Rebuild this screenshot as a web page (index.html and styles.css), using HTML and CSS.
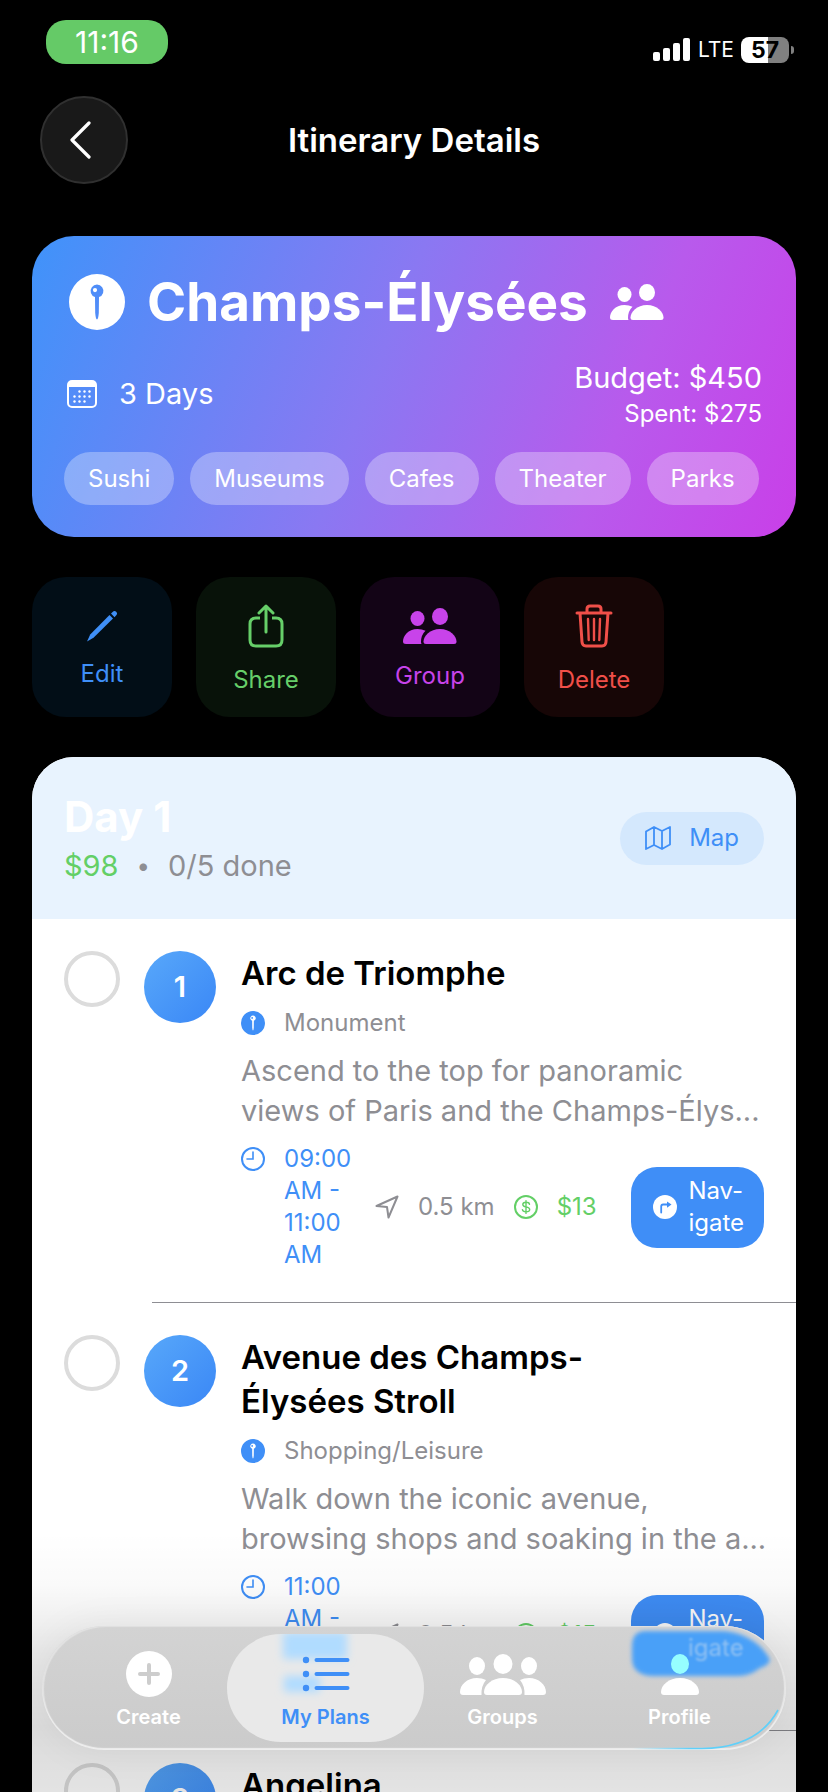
FILE: index.html
```html
<!DOCTYPE html>
<html lang="en">
<head>
	<meta charset="UTF-8">
	<meta name="viewport" content="width=device-width, initial-scale=1">
	<title>Itinerary Details</title>
	<link rel="stylesheet" href="styles.css">
</head>
<body>
	<svg class="sprite" aria-hidden="true">
		<symbol id="pin" viewBox="0 0 56 56">
			<path fill-rule="evenodd" d="M28 0A28 28 0 1 1 28 56A28 28 0 1 1 28 0ZM26 23L26.200 39Q26.800 45.500 28 45.500Q29.200 45.500 29.800 39L30 23A6.400 6.400 0 1 0 26 23ZM26 14A2.100 2.100 0 1 1 26 18.200A2.100 2.100 0 1 1 26 14Z"/>
		</symbol>
		<symbol id="people" viewBox="0 0 54 36">
			<ellipse cx="14.500" cy="10.500" rx="7" ry="7.500"/>
			<ellipse cx="37" cy="8.500" rx="8" ry="8.500"/>
			<path d="M3 36Q0 36 0 33.500C0 28 5 21 14.500 21Q19 21 22.500 22.800Q18 27 18 34Q18 35 18.500 36Z"/>
			<path d="M23 36Q20.500 36 20.500 33.500C20.500 28 27 21 37 21S53.500 28 53.500 33.500Q53.500 36 51 36Z"/>
		</symbol>
		<symbol id="clock" viewBox="0 0 24 24">
			<circle cx="12" cy="12" r="11" fill="none" stroke="currentColor" stroke-width="2"/>
			<path d="M12 5V12H6" fill="none" stroke="currentColor" stroke-width="1.600" stroke-linecap="round"/>
		</symbol>
		<symbol id="arrow" viewBox="0 0 24 24">
			<path d="M1.500 11L22.500 1.500L13.500 22.500L12 12Z" fill="none" stroke="currentColor" stroke-width="2" stroke-linejoin="round"/>
		</symbol>
		<symbol id="coin" viewBox="0 0 24 24">
			<circle cx="12" cy="12" r="11" fill="none" stroke="currentColor" stroke-width="2"/>
			<path d="M15.500 9.200Q15 7.300 12 7.300Q8.800 7.300 8.800 9.500Q8.800 11.300 12 11.900Q15.700 12.600 15.700 14.500Q15.700 16.800 12 16.800Q8.800 16.800 8.400 14.700M12 5.600V18.400" fill="none" stroke="currentColor" stroke-width="1.400" stroke-linecap="round"/>
		</symbol>
		<symbol id="turn" viewBox="0 0 24 24">
			<circle cx="12" cy="12" r="12" fill="#fff"/>
			<path d="M8.200 17.500V11.500Q8.200 9.500 10.200 9.500H14.500" fill="none" stroke="#3f8ef7" stroke-width="1.800" stroke-linecap="round"/>
			<path d="M14 6.500L18.500 9.600L14 12.700Z" fill="#3f8ef7"/>
		</symbol>
	</svg>

	<div class="app">
		<div class="status">
			<span class="clock">11:16</span>
			<div class="signal">
				<svg width="38" height="24" viewBox="0 0 38 24" fill="#fff" aria-hidden="true">
					<rect x="0" y="14" width="7" height="9" rx="2"/>
					<rect x="10" y="10" width="7" height="13" rx="2"/>
					<rect x="20" y="5" width="7" height="18" rx="2"/>
					<rect x="30" y="0" width="7" height="23" rx="2"/>
				</svg>
				<span class="network">LTE</span>
				<span class="battery">57</span>
			</div>
		</div>

		<header class="topbar">
			<button type="button" class="back" aria-label="Back">
				<svg width="24" height="38" viewBox="0 0 24 38" aria-hidden="true">
					<path d="M20 2L3 19L20 36" fill="none" stroke="#fff" stroke-width="3.200" stroke-linecap="round" stroke-linejoin="round"/>
				</svg>
			</button>
			<h1 class="topbar-title">Itinerary Details</h1>
		</header>

		<main class="content">
			<section class="trip">
				<div class="trip-head">
					<svg class="trip-pin" aria-hidden="true"><use href="#pin"/></svg>
					<h2 class="trip-name">Champs-Élysées</h2>
					<svg class="people" aria-hidden="true"><use href="#people"/></svg>
				</div>
				<div class="trip-info">
					<svg width="30" height="28" viewBox="0 0 30 28" aria-hidden="true">
						<rect x="1" y="1" width="28" height="26" rx="4" fill="none" stroke="#fff" stroke-width="2"/>
						<path d="M1 7V4Q1 1 4 1H26Q29 1 29 4V7Z" fill="#fff"/>
						<g fill="#fff">
							<circle cx="12.500" cy="11.500" r="1.200"/><circle cx="17.500" cy="11.500" r="1.200"/><circle cx="22.500" cy="11.500" r="1.200"/>
							<circle cx="7.500" cy="16.500" r="1.200"/><circle cx="12.500" cy="16.500" r="1.200"/><circle cx="17.500" cy="16.500" r="1.200"/><circle cx="22.500" cy="16.500" r="1.200"/>
							<circle cx="7.500" cy="21.500" r="1.200"/><circle cx="12.500" cy="21.500" r="1.200"/><circle cx="17.500" cy="21.500" r="1.200"/>
						</g>
					</svg>
					<span class="days">3 Days</span>
					<div class="money">
						<div class="budget">Budget: $450</div>
						<div class="spent">Spent: $275</div>
					</div>
				</div>
				<ul class="tags">
					<li class="tag">Sushi</li>
					<li class="tag">Museums</li>
					<li class="tag">Cafes</li>
					<li class="tag">Theater</li>
					<li class="tag">Parks</li>
				</ul>
			</section>

			<div class="actions">
				<button type="button" class="action edit">
					<svg width="32" height="32" viewBox="0 0 32 32" fill="currentColor" aria-hidden="true">
						<path d="M23.500 5L27 8.500L7.500 27.800L1 31.500L4.200 24.500Z"/>
						<path d="M25 3.500L27.500 1.300Q28.800 0.300 30.200 1.800Q31.800 3.400 30.700 4.700L28.500 7.200Z"/>
					</svg>
					Edit
				</button>
				<button type="button" class="action share">
					<svg width="36" height="44" viewBox="0 0 36 44" fill="none" stroke="currentColor" stroke-width="3" stroke-linecap="round" stroke-linejoin="round" aria-hidden="true">
						<path d="M12 14H8Q2 14 2 20V36Q2 42 8 42H28Q34 42 34 36V20Q34 14 28 14H24" stroke-linecap="butt"/>
						<path d="M18 28V2M11 9L18 2L25 9"/>
					</svg>
					Share
				</button>
				<button type="button" class="action group">
					<svg class="people" aria-hidden="true"><use href="#people"/></svg>
					Group
				</button>
				<button type="button" class="action delete">
					<svg width="38" height="44" viewBox="0 0 38 44" fill="none" stroke="currentColor" stroke-width="3" stroke-linecap="round" stroke-linejoin="round" aria-hidden="true">
						<path d="M2 9H36M12 9V5Q12 2 15 2H23Q26 2 26 5V9M5 9L7 38Q7.300 42 11 42H27Q30.700 42 31 38L33 9"/>
						<path d="M13 15L13.700 36M19 15V36M25 15L24.300 36" stroke-width="2.400"/>
					</svg>
					Delete
				</button>
			</div>

			<section class="day">
				<div class="day-head">
					<div>
						<h2 class="day-title">Day 1</h2>
						<div class="day-info">
							<span class="cost">$98</span>
							<span class="dot">•</span>
							<span>0/5 done</span>
						</div>
					</div>
					<button type="button" class="map">
						<svg width="26" height="24" viewBox="0 0 26 24" fill="none" stroke="currentColor" stroke-width="1.800" stroke-linejoin="round" aria-hidden="true">
							<path d="M1 5.500L9 1V19L1 23ZM9 1L17 5V23L9 19M17 5L25 1V18.500L17 23"/>
						</svg>
						Map
					</button>
				</div>

				<article class="stop">
					<input type="checkbox" class="check" aria-label="Arc de Triomphe done">
					<span class="number">1</span>
					<div class="stop-body">
						<h3 class="stop-title">Arc de Triomphe</h3>
						<div class="category">
							<svg class="icon" aria-hidden="true"><use href="#pin"/></svg>
							<span>Monument</span>
						</div>
						<p class="desc">Ascend to the top for panoramic<br>views of Paris and the Champs-Élys...</p>
						<div class="meta">
							<div class="time">
								<svg class="icon" aria-hidden="true"><use href="#clock"/></svg>
								<span class="hours">09:00 AM - 11:00 AM</span>
							</div>
							<div class="fact">
								<svg class="icon" aria-hidden="true"><use href="#arrow"/></svg>
								<span>0.5 km</span>
							</div>
							<div class="fact price">
								<svg class="icon" aria-hidden="true"><use href="#coin"/></svg>
								<span>$13</span>
							</div>
							<button type="button" class="navigate">
								<svg class="icon" aria-hidden="true"><use href="#turn"/></svg>
								<span>Nav-<br>igate</span>
							</button>
						</div>
					</div>
				</article>
				<hr class="line">

				<article class="stop">
					<input type="checkbox" class="check" aria-label="Avenue des Champs-Élysées Stroll done">
					<span class="number">2</span>
					<div class="stop-body">
						<h3 class="stop-title">Avenue des Champs-<br>Élysées Stroll</h3>
						<div class="category">
							<svg class="icon" aria-hidden="true"><use href="#pin"/></svg>
							<span>Shopping/Leisure</span>
						</div>
						<p class="desc">Walk down the iconic avenue,<br>browsing shops and soaking in the a...</p>
						<div class="meta">
							<div class="time">
								<svg class="icon" aria-hidden="true"><use href="#clock"/></svg>
								<span class="hours">11:00 AM - 01:00 PM</span>
							</div>
							<div class="fact">
								<svg class="icon" aria-hidden="true"><use href="#arrow"/></svg>
								<span>0.5 km</span>
							</div>
							<div class="fact price">
								<svg class="icon" aria-hidden="true"><use href="#coin"/></svg>
								<span>$15</span>
							</div>
							<button type="button" class="navigate">
								<svg class="icon" aria-hidden="true"><use href="#turn"/></svg>
								<span>Nav-<br>igate</span>
							</button>
						</div>
					</div>
				</article>
				<hr class="line">

				<article class="stop">
					<input type="checkbox" class="check" aria-label="Angelina done">
					<span class="number">3</span>
					<div class="stop-body">
						<h3 class="stop-title">Angelina</h3>
					</div>
				</article>
			</section>
		</main>

		<div class="shade"></div>

		<nav class="tabs">
			<!-- colour that bleeds through the glass from the list below -->
			<svg class="glow" viewBox="0 0 744 124" preserveAspectRatio="none" aria-hidden="true">
				<defs>
					<filter id="soft" x="-20%" y="-40%" width="140%" height="180%"><feGaussianBlur stdDeviation="2"/></filter>
					<filter id="faint" x="-20%" y="-40%" width="140%" height="180%"><feGaussianBlur stdDeviation="0.800"/></filter>
					<linearGradient id="cyan"><stop offset="0" stop-color="#5fd0fa" stop-opacity="0"/><stop offset=".4" stop-color="#5fd0fa"/><stop offset="1" stop-color="#5fd0fa"/></linearGradient>
				</defs>
				<path d="M590 20Q590 5 604 5H680C704 6 722 20 728 34Q727 39 718 42Q708 50 696 50H610Q590 49 590 32Z" fill="#48a0f8" filter="url(#soft)"/>
				<text x="646" y="30" class="ghost" filter="url(#faint)">igate</text>
				<path d="M590 122.500H660C700 122 723 108 736 84" fill="none" stroke="url(#cyan)" stroke-width="1.600"/>
			</svg>
			<a href="#create" class="tab">
				<svg width="46" height="46" viewBox="0 0 46 46" aria-hidden="true">
					<circle cx="23" cy="23" r="23" fill="#fff"/>
					<path d="M23 14V32M14 23H32" stroke="#cdcdcd" stroke-width="4" stroke-linecap="round"/>
				</svg>
				<span>Create</span>
			</a>
			<a href="#plans" class="tab active">
				<svg class="bleed" width="196" height="108" viewBox="0 0 196 108" aria-hidden="true">
					<defs><filter id="wide" x="-30%" y="-60%" width="160%" height="220%"><feGaussianBlur stdDeviation="4"/></filter></defs>
					<rect x="56" y="-2" width="64" height="27" fill="#b0dcff" filter="url(#wide)"/>
					<rect x="57" y="42" width="36" height="16" fill="#b0dcff" filter="url(#wide)"/>
				</svg>
				<svg width="48" height="46" viewBox="0 0 48 46" fill="currentColor" aria-hidden="true">
					<circle cx="4" cy="9" r="3.200"/><circle cx="4" cy="23" r="3.200"/><circle cx="4" cy="37" r="3.200"/>
					<path d="M14.500 9H45.500M14.500 23H45.500M14.500 37H45.500" stroke="currentColor" stroke-width="4" stroke-linecap="round"/>
				</svg>
				<span>My Plans</span>
			</a>
			<a href="#groups" class="tab">
				<svg width="86" height="46" viewBox="0 0 86 46" fill="currentColor" aria-hidden="true">
					<ellipse cx="17" cy="15" rx="8" ry="9"/>
					<ellipse cx="69" cy="15" rx="8" ry="9"/>
					<ellipse cx="43" cy="13" rx="9.500" ry="10"/>
					<path d="M3 44Q0 44 0 41C0 34 7 27 17 27Q22 27 26 29Q21 35 21.500 44Z"/>
					<path d="M83 44Q86 44 86 41C86 34 79 27 69 27Q64 27 60 29Q65 35 64.500 44Z"/>
					<path d="M27 44Q24 44 24 41C24 34 32 27 43 27S62 34 62 41Q62 44 59 44Z"/>
				</svg>
				<span>Groups</span>
			</a>
			<a href="#profile" class="tab">
				<svg width="38" height="46" viewBox="0 0 38 46" aria-hidden="true">
					<ellipse cx="19" cy="13" rx="9" ry="10" fill="#96feff"/>
					<path d="M3 44Q0 44 0 41C0 34 8 27 19 27S38 34 38 41Q38 44 35 44Z" fill="#fff"/>
				</svg>
				<span>Profile</span>
			</a>
		</nav>
	</div>
</body>
</html>
```
FILE: styles.css
```css
*{
	box-sizing: border-box;
}
body{
	margin: 0;
	background-color: #000;
	font-family: Inter, "Liberation Sans", sans-serif;
	font-size: 24px;
	line-height: 32px;
}
h1, h2, h3, p, ul{
	margin: 0;
	padding: 0;
}
button{
	font: inherit;
	border: none;
	padding: 0;
	cursor: pointer;
}
svg{
	flex: none;
}
.sprite{
	position: absolute;
	width: 0;
	height: 0;
}
.app{
	height: 100vh;
	position: relative;
	overflow: hidden;
	display: flex;
	flex-direction: column;
}

/* status bar */
.status{
	flex: none;
	display: flex;
	justify-content: space-between;
	align-items: flex-start;
	padding: 20px 34px 0 46px;
	color: #fff;
}
.clock{
	width: 122px;
	line-height: 44px;
	text-align: center;
	font-size: 30px;
	border-radius: 20px;
	background-color: #65ca67;
}
.signal{
	display: flex;
	align-items: center;
	gap: 7px;
	height: 60px;
}
.network{
	font-size: 21px;
}
.battery{
	position: relative;
	width: 48px;
	margin-right: 5px;
	line-height: 26px;
	text-align: center;
	font-size: 23px;
	font-weight: 700;
	color: #000;
	border-radius: 8px;
	background: linear-gradient(90deg, #fff 56%, #808080 56%);
}
.battery::after{
	content: "";
	position: absolute;
	right: -5px;
	top: 9px;
	width: 3px;
	height: 8px;
	border-radius: 0 4px 4px 0;
	background-color: #808080;
}

/* top bar */
.topbar{
	flex: none;
	display: grid;
	grid-template-columns: 88px 1fr 88px;
	align-items: center;
	padding: 16px 40px 52px;
}
.back{
	display: flex;
	align-items: center;
	justify-content: center;
	height: 88px;
	padding-right: 6px;
	border-radius: 50%;
	border: 2px solid #303030;
	background-color: #191919;
}
.topbar-title{
	text-align: center;
	color: #fff;
	font-size: 33px;
	font-weight: 600;
}

.content{
	flex: 1;
	min-height: 0;
	overflow: hidden;
	padding: 0 32px;
}

/* trip card */
.trip{
	padding: 32px;
	color: #fff;
	border-radius: 42px;
	background: linear-gradient(111deg, #3f93fa, #8a78f2 45%, #b85aec 75%, #c93fe8);
}
.trip-head{
	display: flex;
	align-items: center;
	gap: 22px;
	padding-left: 5px;
	height: 68px;
}
.trip-pin{
	width: 56px;
	height: 56px;
	fill: #fff;
}
.trip-name{
	font-size: 53px;
	line-height: 68px;
	font-weight: 700;
}
.people{
	width: 54px;
	height: 36px;
	fill: currentColor;
}
.trip-info{
	display: flex;
	align-items: center;
	padding: 22px 2px 22px 3px;
}
.days{
	margin-left: 22px;
	font-size: 29px;
}
.money{
	margin-left: auto;
	text-align: right;
}
.budget{
	font-size: 29px;
	line-height: 40px;
}
.tags{
	display: flex;
	gap: 16px;
	list-style: none;
}
.tag{
	padding: 0 24px;
	line-height: 53px;
	border-radius: 27px;
	background-color: rgba(255,255,255,.3);
}

/* actions */
.actions{
	display: flex;
	gap: 24px;
	padding: 40px 0;
}
.action{
	display: flex;
	flex-direction: column;
	align-items: center;
	justify-content: center;
	gap: 16px;
	width: 140px;
	height: 140px;
	padding-top: 6px;
	border-radius: 34px;
}
.edit{
	color: #3f8ff7;
	background-color: #020e17;
}
.share{
	color: #66cf69;
	background-color: #081209;
}
.group{
	color: #c843ea;
	background-color: #130416;
}
.delete{
	color: #f04f49;
	background-color: #170606;
}

/* day card */
.day{
	overflow: hidden;
	border-radius: 42px 42px 0 0;
	background-color: #fff;
}
.day-head{
	display: flex;
	justify-content: space-between;
	align-items: center;
	padding: 32px;
	color: #8e8e93;
	background-color: #e8f3fe;
}
.day-title{
	color: #fff;
	font-size: 42px;
	line-height: 56px;
	font-weight: 700;
}
.day-info{
	display: flex;
	gap: 18px;
	font-size: 29px;
	line-height: 42px;
}
.dot{
	font-size: 24px;
}
.cost, .price{
	color: #63cf66;
}
.map{
	display: flex;
	align-items: center;
	gap: 18px;
	padding: 0 25px;
	height: 53px;
	color: #3f8ff7;
	border-radius: 27px;
	background-color: #d4e8fd;
}

/* stops */
.stop{
	display: flex;
	align-items: flex-start;
	gap: 24px;
	padding: 32px 32px 31px;
}
.check{
	flex: none;
	appearance: none;
	width: 56px;
	height: 56px;
	margin: 0;
	border: 4px solid #dcdcdc;
	border-radius: 50%;
}
.check:checked{
	border-color: #3f8ff7;
	background-color: #3f8ff7;
}
.number{
	flex: none;
	width: 72px;
	line-height: 72px;
	text-align: center;
	color: #fff;
	font-size: 29px;
	font-weight: 600;
	border-radius: 50%;
	background: linear-gradient(135deg, #58a8fa, #3a87f6);
}
.stop-body{
	flex: 1;
	min-width: 0;
	display: flex;
	flex-direction: column;
	gap: 12px;
	padding-left: 1px;
	color: #8e8e93;
}
.stop-title{
	color: #000;
	font-size: 33px;
	line-height: 44px;
	font-weight: 600;
}
.icon{
	width: 24px;
	height: 24px;
}
.category, .fact{
	display: flex;
	align-items: center;
	gap: 19px;
	white-space: nowrap;
}
.category .icon{
	fill: #3f8ff7;
}
.desc{
	font-size: 29px;
	line-height: 40px;
	white-space: nowrap;
}
.meta{
	display: flex;
	align-items: center;
	gap: 19px;
}
.time{
	display: flex;
	gap: 19px;
	color: #3f8ff7;
}
.time .icon{
	margin-top: 4px;
}
.hours{
	width: 72px;
}
.navigate{
	display: flex;
	align-items: center;
	gap: 11px;
	margin-left: auto;
	padding: 8px 20px 8px 22px;
	height: 81px;
	text-align: left;
	color: #fff;
	border-radius: 26px;
	background-color: #3f8ef7;
}
.line{
	height: 1px;
	margin: 0 0 0 120px;
	border: none;
	background-color: #8e8e93;
}

/* dimming under the tab bar */
.shade{
	position: absolute;
	left: 0;
	right: 0;
	bottom: 0;
	height: 260px;
	pointer-events: none;
	background: linear-gradient(rgba(0,0,0,0), rgba(0,0,0,.02) 20%, rgba(0,0,0,.09) 45%, rgba(0,0,0,.14) 75%, rgba(0,0,0,.11));
}

/* tab bar */
.tabs{
	position: absolute;
	left: 42px;
	right: 42px;
	bottom: 42px;
	height: 124px;
	display: flex;
	padding: 8px 18px;
	border-radius: 62px;
	overflow: hidden;
	background: linear-gradient(#d3d3d3, #cbcbcb);
	box-shadow: inset 0 -2px 1px #eee, inset 2px 1px 1px #e2e2e2, inset -2px 0 1px #e6e6e6, 0 0 40px rgba(0,0,0,.06);
}
.glow{
	position: absolute;
	left: 0;
	top: 0;
	width: 100%;
	height: 100%;
}
.ghost{
	font-size: 24px;
	fill: rgba(190,215,240,.6);
}
.tab{
	position: relative;
	flex: 1;
	display: flex;
	flex-direction: column;
	align-items: center;
	gap: 4px;
	padding-top: 17px;
	color: #fff;
	font-size: 20px;
	line-height: 32px;
	font-weight: 600;
	text-decoration: none;
}
.tab svg, .tab span{
	position: relative;
}
.tab.active{
	color: #3f8ff7;
	margin: 0 -10px;
	flex: 1 0 20px;
	border-radius: 54px;
	overflow: hidden;
	background-color: #e9e9e9;
}
.tab .bleed{
	position: absolute;
	left: 0;
	top: 0;
}
```
